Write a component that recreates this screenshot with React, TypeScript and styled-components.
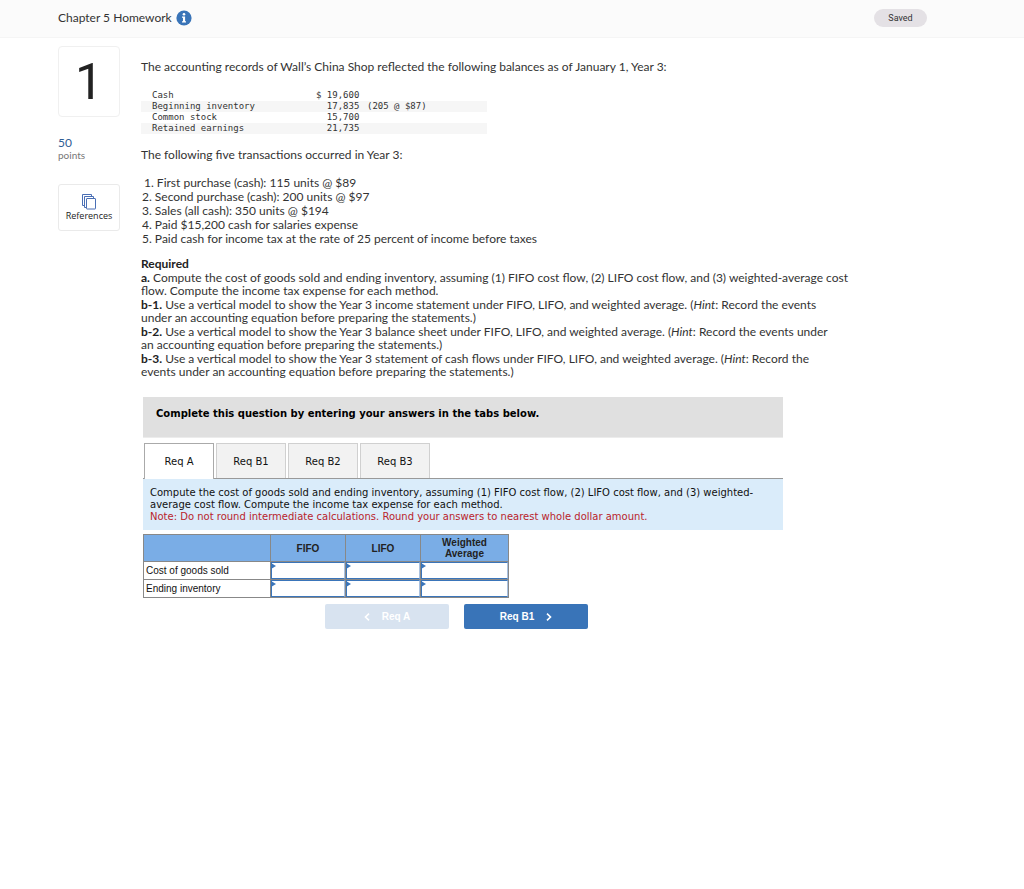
import React from "react";
import styled, { createGlobalStyle } from "styled-components";

const body = `"Proxima Nova", Lato, sans-serif`;
const verdana = `Verdana, "DejaVu Sans", sans-serif`;

const Global = createGlobalStyle`
  * { box-sizing: border-box; }
  body { margin: 0; background: #fff; color: #333; font-family: ${body}; font-size: 12px; }
  p, h1, h2, ol { margin: 0; padding: 0; }
  button, input { font-family: inherit; }
`;

const Header = styled.header`
  display: flex;
  align-items: center;
  justify-content: space-between;
  height: 38px;
  padding: 0 97px 2px 58px;
  background: #fbfbfb;
  border-bottom: 1px solid #f5f5f5;
`;

const Title = styled.h1`
  display: flex;
  align-items: center;
  gap: 4px;
  font-size: 12px;
  font-weight: 400;
`;

const InfoButton = styled.button`
  display: flex;
  padding: 0;
  border: 0;
  background: none;
`;

const SavedPill = styled.span`
  display: flex;
  align-items: center;
  justify-content: center;
  width: 53px;
  height: 18px;
  border-radius: 9px;
  background: #e4e1e5;
  font-family: Roboto, sans-serif;
  font-size: 9px;
  color: #333;
`;

const Main = styled.main`
  display: flex;
  gap: 21px;
  padding: 8px 58px;
`;

const Sidebar = styled.aside`
  flex: none;
  width: 62px;
`;

const NumberCard = styled.div`
  display: flex;
  align-items: center;
  justify-content: center;
  height: 71px;
  border: 1px solid #f0f0f0;
  border-radius: 4px;
  font-family: Roboto, sans-serif;
  font-size: 50px;
  color: #222;
`;

const Points = styled.div`
  margin-top: 19px;
  line-height: 14px;
  color: #2f5d94;
`;

const PointsLabel = styled.div`
  font-size: 10px;
  line-height: 10px;
  color: #777;
`;

const ReferencesButton = styled.button`
  display: flex;
  flex-direction: column;
  align-items: center;
  justify-content: center;
  width: 100%;
  height: 47px;
  margin-top: 24px;
  padding: 1px 0 0;
  border: 1px solid #eaeaea;
  border-radius: 3px;
  background: #fff;
  font-family: "Open Sans", sans-serif;
  font-size: 9px;
  line-height: 12px;
  color: #222;
`;

const Content = styled.div`
  flex: 1;
  min-width: 0;
  max-width: 720px;
`;

const Paragraph = styled.p`
  line-height: 14px;
`;

const Intro = styled(Paragraph)`
  padding: 14px 0 16px;
`;

const Transactions = styled(Paragraph)`
  padding: 14px 0 14px;
`;

const Balances = styled.table`
  width: 346px;
  border-collapse: collapse;
  font-family: Consolas, "DejaVu Sans Mono", monospace;
  font-size: 9px;
  line-height: 11px;
  tr:nth-child(even) { background: #f6f6f6; }
  th, td { padding: 0; font-weight: 400; text-align: left; white-space: pre; }
  th { width: 175px; padding-left: 11px; }
  td:nth-child(2) { width: 51px; }
`;

const Steps = styled.ol`
  list-style: none;
  line-height: 14px;
`;

const Step = styled.li<{ $narrow?: boolean }>`
  padding-left: ${(p) => (p.$narrow ? 3 : 1)}px;
`;

const Required = styled.section`
  padding-top: 11px;
  line-height: 13px;
  h2 { font-size: 12px; line-height: 14px; }
  p { margin-bottom: 1px; white-space: nowrap; }
  b, h2 { color: #222; }
`;

const Answer = styled.section`
  max-width: 640px;
  margin: 19px 0 0 2px;
  font-family: ${verdana};
  font-size: 10px;
  color: #111;
`;

const Banner = styled.div`
  height: 41px;
  padding: 11px 13px;
  background: #e0e0e0;
  border-bottom: 1px solid #ececec;
  font-weight: 700;
  line-height: 12px;
  color: #000;
`;

const Tabs = styled.div`
  display: flex;
  gap: 2px;
  padding: 5px 0 0 1px;
  border-bottom: 1px solid #999;
`;

const Tab = styled.button<{ $active?: boolean }>`
  width: 70px;
  height: ${(p) => (p.$active ? 36 : 35)}px;
  margin-bottom: ${(p) => (p.$active ? -1 : 0)}px;
  padding: 0;
  border: 1px solid ${(p) => (p.$active ? "#aaa" : "#d0d0d0")};
  border-bottom: 0;
  background: ${(p) => (p.$active ? "#fff" : "#f2f2f2")};
  font-size: 10px;
  color: #111;
`;

const Instructions = styled.div`
  padding: 8px 7px 7px;
  background: #daecfa;
  line-height: 12px;
`;

const Note = styled.p`
  color: #b9242c;
`;

const Sheet = styled.table`
  width: 365px;
  margin-top: 4px;
  border-collapse: collapse;
  table-layout: fixed;
  font-family: Arial, "Liberation Sans", sans-serif;
  th, td { padding: 0; border: 1px solid #888; }
  thead th { height: 27px; background: #7aade6; font-size: 10px; line-height: 11px; color: #222; }
  tbody th { height: 17px; padding-left: 2px; font-weight: 400; text-align: left; line-height: 12px; }
`;

const Col = styled.col<{ $w: number }>`
  width: ${(p) => p.$w}px;
`;

const Field = styled.div`
  position: relative;
  display: flex;
  &::after {
    content: "";
    position: absolute;
    top: 1px;
    left: 0;
    border: 3px solid transparent;
    border-left: 5px solid #3a75ba;
    border-right: 0;
  }
`;

const AmountInput = styled.input`
  width: 100%;
  height: 17px;
  padding: 0 4px;
  border: 1px solid #3a75ba;
  border-right-color: #a9c1e0;
  background: #fff;
  font-size: 10px;
  outline: 0;
`;

const Nav = styled.nav`
  display: flex;
  gap: 15px;
  margin: 6px 0 0 182px;
`;

const NavButton = styled.button`
  display: flex;
  align-items: center;
  justify-content: center;
  gap: 12px;
  width: 124px;
  height: 25px;
  padding: 0;
  border: 0;
  border-radius: 2px;
  background: #3974b8;
  color: #fff;
  font-family: Arial, "Liberation Sans", sans-serif;
  font-size: 10px;
  font-weight: 700;
  &:disabled { background: #d8e3f0; color: #fff; }
`;

const Chevron = ({ left }: { left?: boolean }) => (
  <svg width="6" height="8" viewBox="0 0 6 8" aria-hidden="true">
    <path d={left ? "M5 0.7 L1.5 4 L5 7.3" : "M1 0.7 L4.5 4 L1 7.3"} fill="none" stroke="currentColor" strokeWidth="1.6" />
  </svg>
);

const InfoIcon = () => (
  <svg width="16" height="16" viewBox="0 0 16 16" aria-hidden="true">
    <circle cx="8" cy="8" r="7.6" fill="#3974b8" />
    <circle cx="8" cy="4.3" r="1.3" fill="#fff" />
    <path d="M6 6.5h3.1v4.7H10v1.2H6v-1.2h1V7.7H6z" fill="#fff" />
  </svg>
);

const CopyIcon = () => (
  <svg width="14" height="16" viewBox="0 0 14 16" fill="none" stroke="#4a6fb5" aria-hidden="true">
    <path d="M2.5 11.5H0.5V0.5H9.5V2.5" />
    <path d="M4.5 13.5H2.5V2.5H11.5V4.5" />
    <rect x="4.5" y="4.5" width="9" height="10.5" rx="0.5" fill="#fff" />
  </svg>
);

const balances = [
  ["Cash", "$ 19,600", ""],
  ["Beginning inventory", "  17,835", "(205 @ $87)"],
  ["Common stock", "  15,700", ""],
  ["Retained earnings", "  21,735", ""],
];

const steps = [
  "1. First purchase (cash): 115 units @ $89",
  "2. Second purchase (cash): 200 units @ $97",
  "3. Sales (all cash): 350 units @ $194",
  "4. Paid $15,200 cash for salaries expense",
  "5. Paid cash for income tax at the rate of 25 percent of income before taxes",
];

const methods = ["FIFO", "LIFO", "Weighted Average"];
const lines = ["Cost of goods sold", "Ending inventory"];

export default function App() {
  return (
    <>
      <Global />
      <Header>
        <Title>
          Chapter 5 Homework
          <InfoButton aria-label="Assignment information"><InfoIcon /></InfoButton>
        </Title>
        <SavedPill>Saved</SavedPill>
      </Header>
      <Main>
        <Sidebar>
          <NumberCard>1</NumberCard>
          <Points>50</Points>
          <PointsLabel>points</PointsLabel>
          <ReferencesButton><CopyIcon />References</ReferencesButton>
        </Sidebar>
        <Content>
          <Intro>The accounting records of Wall’s China Shop reflected the following balances as of January 1, Year 3:</Intro>
          <Balances>
            <tbody>
              {balances.map(([name, value, note]) => (
                <tr key={name}><th scope="row">{name}</th><td>{value}</td><td>{note}</td></tr>
              ))}
            </tbody>
          </Balances>
          <Transactions>The following five transactions occurred in Year 3:</Transactions>
          <Steps>
            {steps.map((s, i) => <Step key={s} $narrow={i === 0}>{s}</Step>)}
          </Steps>
          <Required>
            <h2>Required</h2>
            <p><b>a.</b> Compute the cost of goods sold and ending inventory, assuming (1) FIFO cost flow, (2) LIFO cost flow, and (3) weighted-average cost<br />flow. Compute the income tax expense for each method.</p>
            <p><b>b-1.</b> Use a vertical model to show the Year 3 income statement under FIFO, LIFO, and weighted average. (<i>Hint</i>: Record the events<br />under an accounting equation before preparing the statements.)</p>
            <p><b>b-2.</b> Use a vertical model to show the Year 3 balance sheet under FIFO, LIFO, and weighted average. (<i>Hint</i>: Record the events under<br />an accounting equation before preparing the statements.)</p>
            <p><b>b-3.</b> Use a vertical model to show the Year 3 statement of cash flows under FIFO, LIFO, and weighted average. (<i>Hint</i>: Record the<br />events under an accounting equation before preparing the statements.)</p>
          </Required>
          <Answer>
            <Banner>Complete this question by entering your answers in the tabs below.</Banner>
            <Tabs role="tablist">
              {["Req A", "Req B1", "Req B2", "Req B3"].map((t, i) => (
                <Tab key={t} role="tab" aria-selected={i === 0} $active={i === 0}>{t}</Tab>
              ))}
            </Tabs>
            <Instructions>
              <p>Compute the cost of goods sold and ending inventory, assuming (1) FIFO cost flow, (2) LIFO cost flow, and (3) weighted-average cost flow. Compute the income tax expense for each method.</p>
              <Note>Note: Do not round intermediate calculations. Round your answers to nearest whole dollar amount.</Note>
            </Instructions>
            <Sheet>
              <colgroup><Col $w={127} /><Col $w={75} /><Col $w={75} /><Col $w={88} /></colgroup>
              <thead>
                <tr>
                  <th aria-label="Item" />
                  <th scope="col">FIFO</th>
                  <th scope="col">LIFO</th>
                  <th scope="col">Weighted<br />Average</th>
                </tr>
              </thead>
              <tbody>
                {lines.map((line) => (
                  <tr key={line}>
                    <th scope="row">{line}</th>
                    {methods.map((m) => (
                      <td key={m}><Field><AmountInput aria-label={`${line}, ${m}`} /></Field></td>
                    ))}
                  </tr>
                ))}
              </tbody>
            </Sheet>
            <Nav>
              <NavButton disabled><Chevron left />Req A</NavButton>
              <NavButton>Req B1<Chevron /></NavButton>
            </Nav>
          </Answer>
        </Content>
      </Main>
    </>
  );
}
